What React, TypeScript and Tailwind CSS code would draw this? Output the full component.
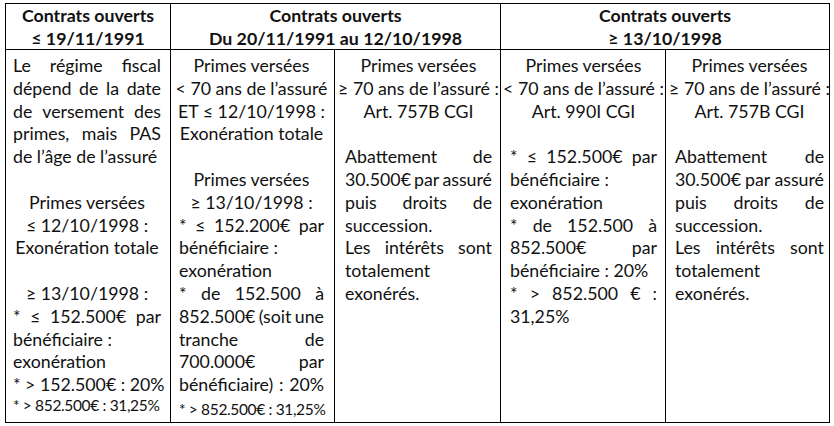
import React from 'react';

type Align = 'c' | 'j' | 'l';
type Line = { t: string; a: Align; small?: boolean; gap?: boolean } | null;

const col1: Line[] = [
  { t: 'Le régime fiscal', a: 'j' },
  { t: 'dépend de la date', a: 'j' },
  { t: 'de versement des', a: 'j' },
  { t: 'primes, mais PAS', a: 'j' },
  { t: 'de l’âge de l’assuré', a: 'l' },
  null,
  { t: 'Primes versées', a: 'c' },
  { t: '≤ 12/10/1998 :', a: 'c' },
  { t: 'Exonération totale', a: 'c' },
  null,
  { t: '≥ 13/10/1998 :', a: 'c' },
  { t: '* ≤ 152.500€ par', a: 'j' },
  { t: 'bénéficiaire :', a: 'l' },
  { t: 'exonération', a: 'l' },
  { t: '* > 152.500€ : 20%', a: 'l' },
  { t: '* > 852.500€ : 31,25%', a: 'l', small: true },
];

const col2: Line[] = [
  { t: 'Primes versées', a: 'c' },
  { t: '< 70 ans de l’assuré', a: 'c' },
  { t: 'ET ≤ 12/10/1998 :', a: 'c' },
  { t: 'Exonération totale', a: 'c' },
  null,
  { t: 'Primes versées', a: 'c' },
  { t: '≥ 13/10/1998 :', a: 'c' },
  { t: '* ≤ 152.200€ par', a: 'j' },
  { t: 'bénéficiaire :', a: 'l' },
  { t: 'exonération', a: 'l' },
  { t: '* de 152.500 à', a: 'j' },
  { t: '852.500€ (soit une', a: 'j' },
  { t: 'tranche de', a: 'j' },
  { t: '700.000€ par', a: 'j' },
  { t: 'bénéficiaire) : 20%', a: 'j' },
  { t: '* > 852.500€ : 31,25%', a: 'l', small: true, gap: true },
];

const col757: Line[] = [
  { t: 'Primes versées', a: 'c' },
  { t: '≥ 70 ans de l’assuré :', a: 'c' },
  { t: 'Art. 757B CGI', a: 'c' },
  null,
  { t: 'Abattement de', a: 'j' },
  { t: '30.500€ par assuré', a: 'j' },
  { t: 'puis droits de', a: 'j' },
  { t: 'succession.', a: 'l' },
  { t: 'Les intérêts sont', a: 'j' },
  { t: 'totalement', a: 'l' },
  { t: 'exonérés.', a: 'l' },
];

const col4: Line[] = [
  { t: 'Primes versées', a: 'c' },
  { t: '< 70 ans de l’assuré :', a: 'c' },
  { t: 'Art. 990I CGI', a: 'c' },
  null,
  { t: '* ≤ 152.500€ par', a: 'j' },
  { t: 'bénéficiaire :', a: 'l' },
  { t: 'exonération', a: 'l' },
  { t: '* de 152.500 à', a: 'j' },
  { t: '852.500€ par', a: 'j' },
  { t: 'bénéficiaire : 20%', a: 'l' },
  { t: '* > 852.500 € :', a: 'j' },
  { t: '31,25%', a: 'l' },
];

// one rendered line of a cell; lines are laid out by hand so the wrapping matches Word's
const CellLine: React.FC<{ line: Line }> = ({ line }) => {
  if (!line) return <div className="h-[22.8px]" />;
  if (line.small) {
    return (
      <div
        className={
          'flex h-[20px] items-center whitespace-nowrap text-[15.5px] tracking-[-0.35px] ' +
          (line.gap ? 'mt-[4px]' : '')
        }
      >
        {line.t}
      </div>
    );
  }
  if (line.a === 'j') {
    return (
      <div className="flex h-[22.8px] items-center justify-between whitespace-nowrap">
        {line.t.split(' ').map((w, i) => (
          <span key={i}>{w}</span>
        ))}
      </div>
    );
  }
  if (line.a === 'c') {
    return (
      <div className="flex h-[22.8px] items-center justify-center whitespace-nowrap">
        {line.t}
      </div>
    );
  }
  return <div className="flex h-[22.8px] items-center whitespace-nowrap">{line.t}</div>;
};

const BodyCell: React.FC<{ lines: Line[]; className: string }> = ({ lines, className }) => (
  <div className={'pt-[4px] ' + className}>
    {lines.map((l, i) => (
      <CellLine key={i} line={l} />
    ))}
  </div>
);

export default function App() {
  return (
    <div
      className="min-h-[426px] bg-white pl-[5px] pt-[3px] text-[#111]"
      style={{ fontFamily: 'Lato, "Open Sans", sans-serif' }}
    >
      <div className="w-[825px] border border-black text-[17.75px]">
        {/* header row */}
        <div className="flex h-[46px] border-b border-black font-bold leading-[23px]">
          <div className="w-[165px] border-r border-black text-center">
            <div className="flex h-[23px] items-center justify-center">Contrats ouverts</div>
            <div className="flex h-[23px] items-center justify-center">≤ 19/11/1991</div>
          </div>
          <div className="w-[330px] border-r border-black text-center">
            <div className="flex h-[23px] items-center justify-center">Contrats ouverts</div>
            <div className="flex h-[23px] items-center justify-center">Du 20/11/1991 au 12/10/1998</div>
          </div>
          <div className="w-[328px] text-center">
            <div className="flex h-[23px] items-center justify-center">Contrats ouverts</div>
            <div className="flex h-[23px] items-center justify-center">≥ 13/10/1998</div>
          </div>
        </div>

        {/* body row */}
        <div className="flex h-[372px]">
          <BodyCell lines={col1} className="w-[165px] border-r border-black pl-[7px] pr-[9px]" />
          <BodyCell lines={col2} className="w-[164px] border-r border-black pl-[8px] pr-[10px]" />
          <BodyCell lines={col757} className="w-[166px] border-r border-black pl-[10px] pr-[8px]" />
          <BodyCell lines={col4} className="w-[165px] border-r border-black pl-[9px] pr-[8px]" />
          <BodyCell lines={col757} className="w-[163px] pl-[9px] pr-[5px]" />
        </div>
      </div>
    </div>
  );
}
